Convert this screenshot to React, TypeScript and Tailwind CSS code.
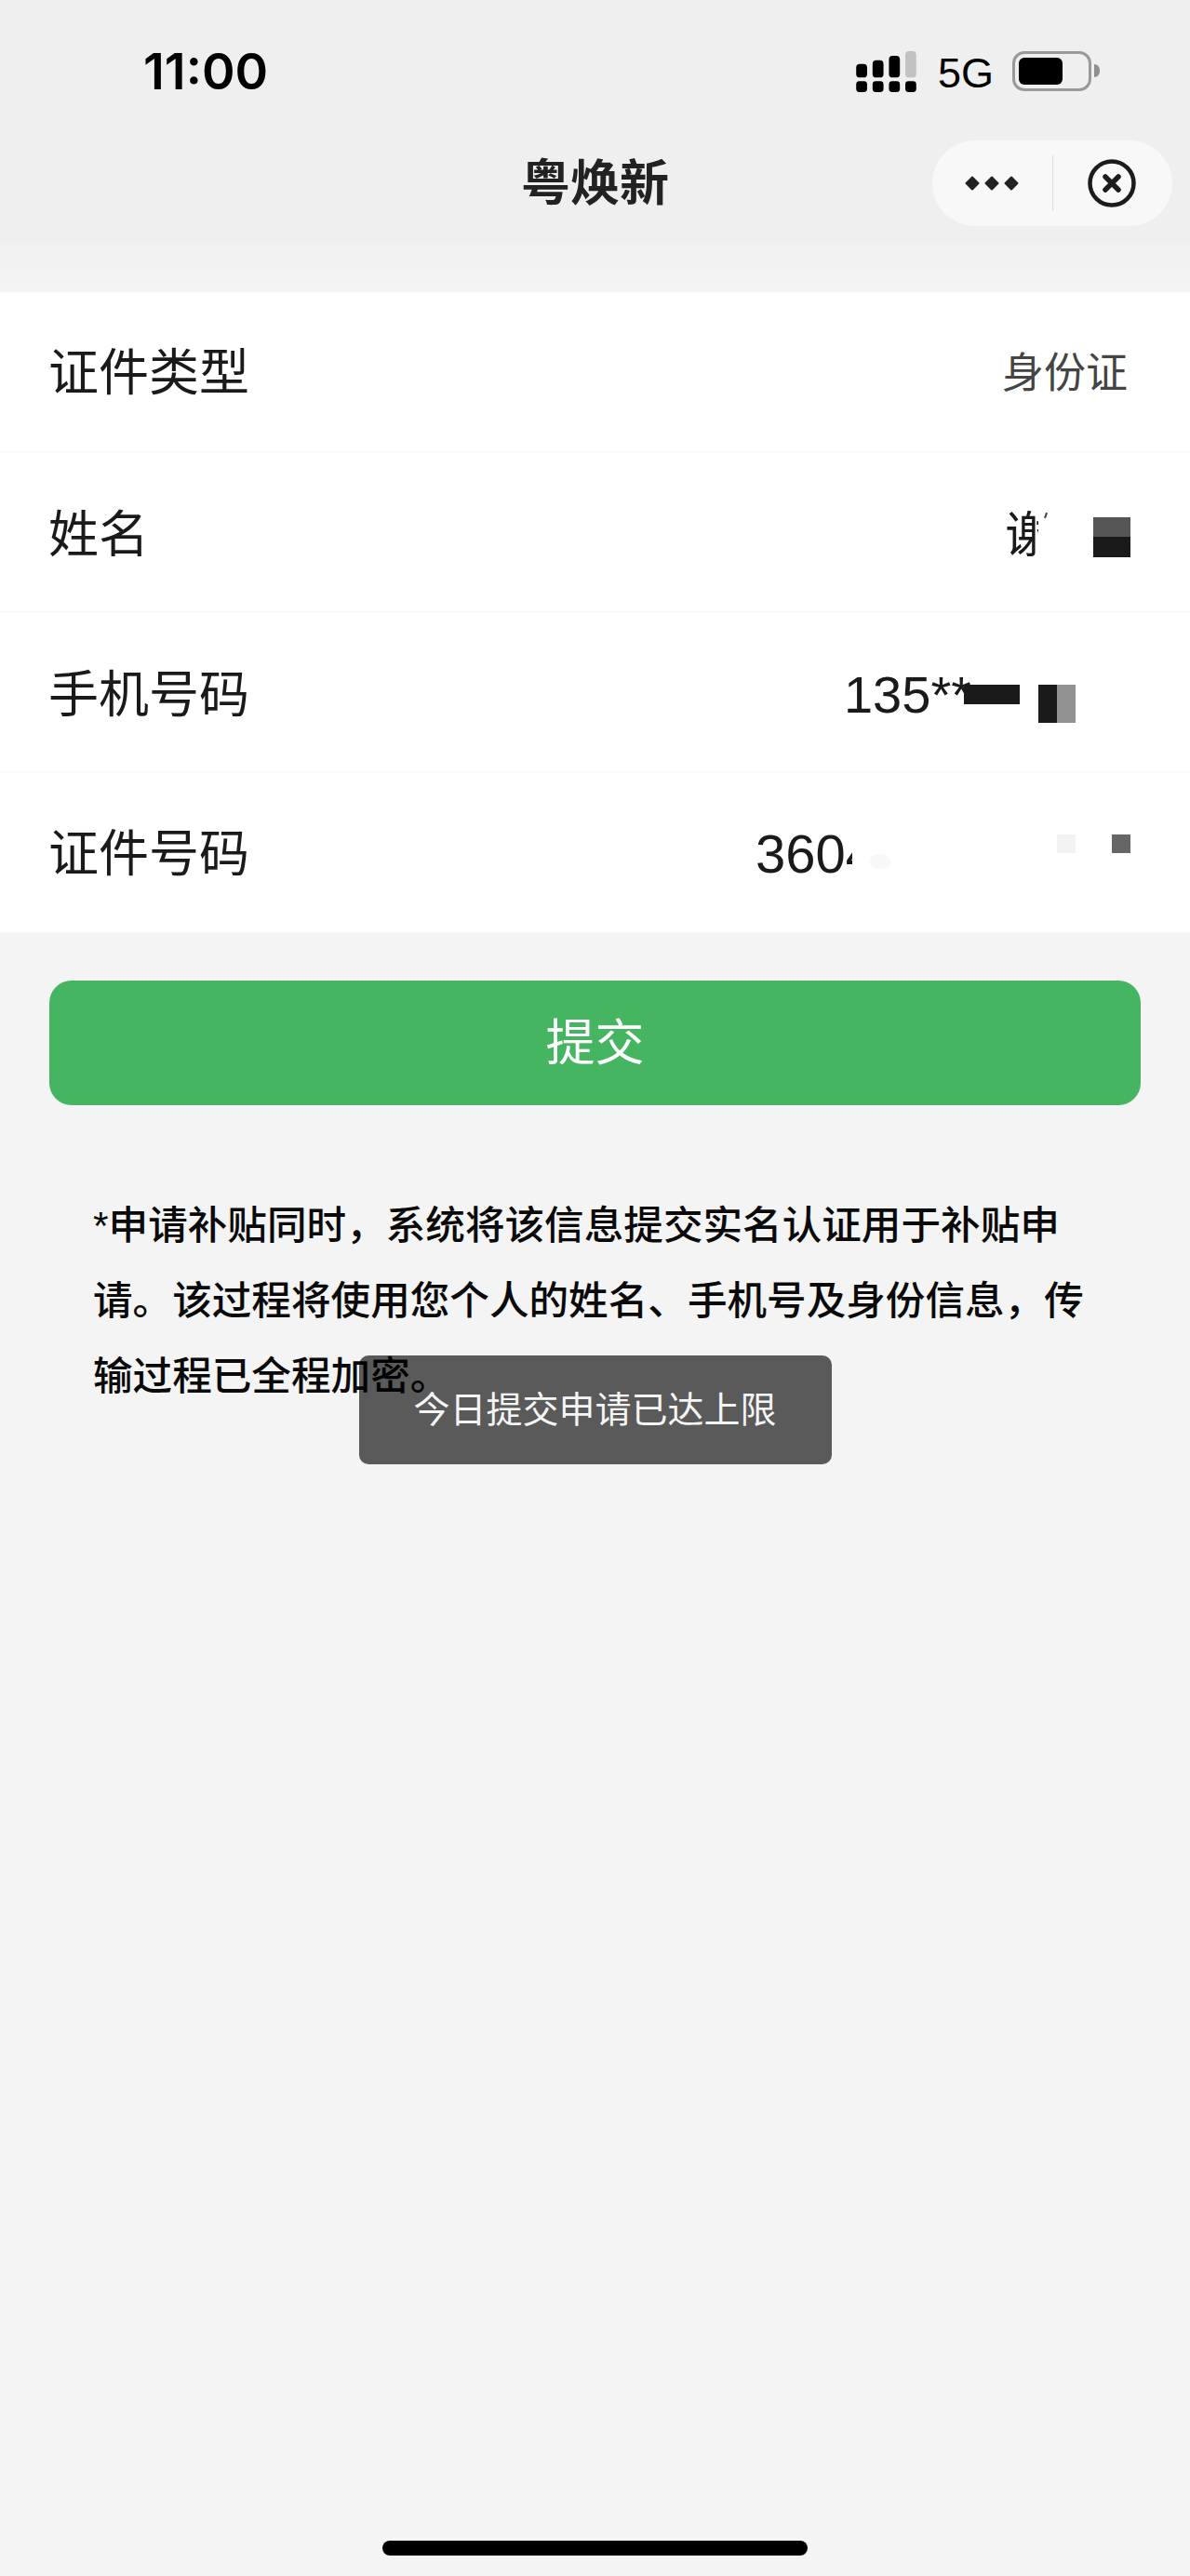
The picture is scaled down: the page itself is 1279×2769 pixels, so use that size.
const fieldRows = [
  { label: '证件类型', padTop: 'pt-[3px]' },
  { label: '姓名', padTop: 'pt-[7px]' },
  { label: '手机号码', padTop: 'pt-[6px]' },
  { label: '证件号码', padTop: 'pt-[3px]' },
]

function SignalIcon() {
  return (
    <svg width="65" height="45" viewBox="0 0 66 46" className="block">
      <g fill="#000">
        <rect x="0" y="33" width="12" height="12" rx="3.5" />
        <rect x="18" y="33" width="12" height="12" rx="3.5" />
        <rect x="36" y="33" width="12" height="12" rx="3.5" />
        <rect x="54" y="33" width="12" height="12" rx="3.5" />
        <rect x="0" y="14" width="12" height="15" rx="4" />
        <rect x="18" y="10" width="12" height="19" rx="4" />
        <rect x="36" y="5" width="12" height="24" rx="4" />
      </g>
      <rect x="54" y="0" width="12" height="29" rx="4" fill="#c2c2c2" />
    </svg>
  )
}

function BatteryIcon() {
  return (
    <div className="flex items-center gap-[3px]">
      <div className="w-[85px] h-[43px] rounded-[13px] border-[3px] border-[#999] p-[4px]">
        <div className="w-[47px] h-full rounded-[6px] bg-black" />
      </div>
      <div className="w-[6px] h-[14px] rounded-r-full bg-[#8f8f8f]" />
    </div>
  )
}

function Capsule() {
  return (
    <div className="absolute right-[19px] top-[18px] w-[258px] h-[92px] rounded-full bg-[#f8f8f8] flex items-center">
      <div className="w-[129px] flex items-center justify-center">
        <svg width="60" height="18" viewBox="0 0 60 18" className="ml-[-2px]">
          <g fill="#222" stroke="#222" strokeWidth="2" strokeLinejoin="round">
            <path d="M9 2.5l6.5 6.5-6.5 6.5-6.5-6.5z" />
            <path d="M30 2.5l6.5 6.5-6.5 6.5-6.5-6.5z" />
            <path d="M51 2.5l6.5 6.5-6.5 6.5-6.5-6.5z" />
          </g>
        </svg>
      </div>
      <div className="w-[1px] h-[60px] bg-[#dcdcdc]" />
      <div className="flex-1 flex items-center justify-center">
        <svg width="52" height="52" viewBox="0 0 52 52" className="mr-[2px]">
          <circle cx="26" cy="26" r="23.5" fill="none" stroke="#1c1c1c" strokeWidth="4.5" />
          <path d="M19 19l14 14M33 19L19 33" stroke="#1c1c1c" strokeWidth="5.5" strokeLinecap="round" />
        </svg>
      </div>
    </div>
  )
}

export default function App() {
  return (
    <div className="relative min-h-[2769px] flex flex-col bg-[#f4f4f4] text-[#1a1a1a] [font-family:'Liberation_Sans','Noto_Sans_CJK_SC',sans-serif]">
      {/* status bar */}
      <div className="h-[133px] bg-[#efefef] flex items-start justify-between pl-[154px] pr-[97px] pt-[50px]">
        <span className="text-[54px] leading-[54px] font-semibold text-black [font-family:'Inter',sans-serif]">11:00</span>
        <div className="flex items-center">
          <div className="mt-[3px]">
            <SignalIcon />
          </div>
          <span className="ml-[23px] mt-[6px] text-[45px] leading-[46px] text-black">5G</span>
          <div className="ml-[20px]">
            <BatteryIcon />
          </div>
        </div>
      </div>

      {/* nav bar */}
      <div className="relative h-[129px] bg-[#efefef] flex items-center justify-center">
        <span className="text-[53px] font-bold leading-none text-[#222]">粤焕新</span>
        <Capsule />
      </div>
      <div className="h-[52px] bg-gradient-to-b from-[#f1f1f1] to-[#f4f4f4]" />

      {/* form rows */}
      <div className="bg-white">
        {fieldRows.map((row, i) => (
          <div key={row.label} className={`relative h-[172px] flex items-center pl-[52px] pr-[53px] ${row.padTop} ${i < 3 ? 'border-b border-[#f6f6f6]' : ''}`}>
            <span className="text-[54px] leading-none">{row.label}</span>
            <div className="ml-auto flex items-center">
              {i === 0 && <span className="text-[45px] leading-none text-[#444] mr-[14px]">身份证</span>}
              {i === 1 && <span className="inline-block w-[36px] overflow-hidden whitespace-nowrap text-[53px] leading-none mr-[110px]">谢</span>}
              {i === 2 && <span className="text-[56px] leading-none mr-[182px]">135**</span>}
              {i === 3 && <span className="inline-block w-[104px] overflow-hidden whitespace-nowrap text-[58px] leading-none mr-[310px]">3604</span>}
            </div>

            {/* mosaic over the personal data */}
            {i === 1 && (
              <>
                <div className="absolute left-[1123px] top-[65px] w-[2px] h-[6px] rotate-[20deg] bg-[#444]" />
                <div className="absolute left-[1175px] top-[70px] w-[40px] h-[43px] flex flex-col">
                  <div className="h-[21px] bg-[#555]" />
                  <div className="flex-1 bg-[#1a1a1a]" />
                </div>
              </>
            )}
            {i === 2 && (
              <>
                <div className="absolute left-[1036px] top-[78px] w-[60px] h-[21px] bg-[#1a1a1a]" />
                <div className="absolute left-[1116px] top-[78px] w-[40px] h-[41px] flex">
                  <div className="w-[20px] bg-[#1a1a1a]" />
                  <div className="w-[20px] bg-[#919191]" />
                </div>
              </>
            )}
            {i === 3 && (
              <>
                <div className="absolute left-[1136px] top-[67px] w-[20px] h-[20px] bg-[#f3f3f3]" />
                <div className="absolute left-[1195px] top-[67px] w-[20px] h-[20px] bg-[#666]" />
                <div className="absolute left-[935px] top-[88px] w-[22px] h-[16px] rounded-full bg-[#f8f8f8]" />
              </>
            )}
          </div>
        ))}
      </div>

      {/* submit */}
      <div className="px-[53px] pt-[52px]">
        <button type="button" className="w-full h-[134px] rounded-[24px] bg-[#46b562] text-white text-[53px] leading-none flex items-center justify-center">
          提交
        </button>
      </div>

      <p className="ml-[100px] mr-[109px] mt-[89px] text-[42.6px] leading-[81px] font-medium text-[#0a0a0a]">
        *申请补贴同时，系统将该信息提交实名认证用于补贴申请。该过程将使用您个人的姓名、手机号及身份信息，传输过程已全程加密。
      </p>

      {/* home indicator */}
      <div className="mt-auto pb-[22px] flex justify-center">
        <div className="w-[457px] h-[16px] rounded-full bg-black" />
      </div>

      {/* toast */}
      <div className="absolute left-1/2 -translate-x-1/2 top-[1457px] w-[508px] h-[117px] rounded-[10px] bg-[rgba(0,0,0,0.63)] text-[#f5f5f5] text-[39px] leading-none flex items-center justify-center">
        今日提交申请已达上限
      </div>
    </div>
  )
}
